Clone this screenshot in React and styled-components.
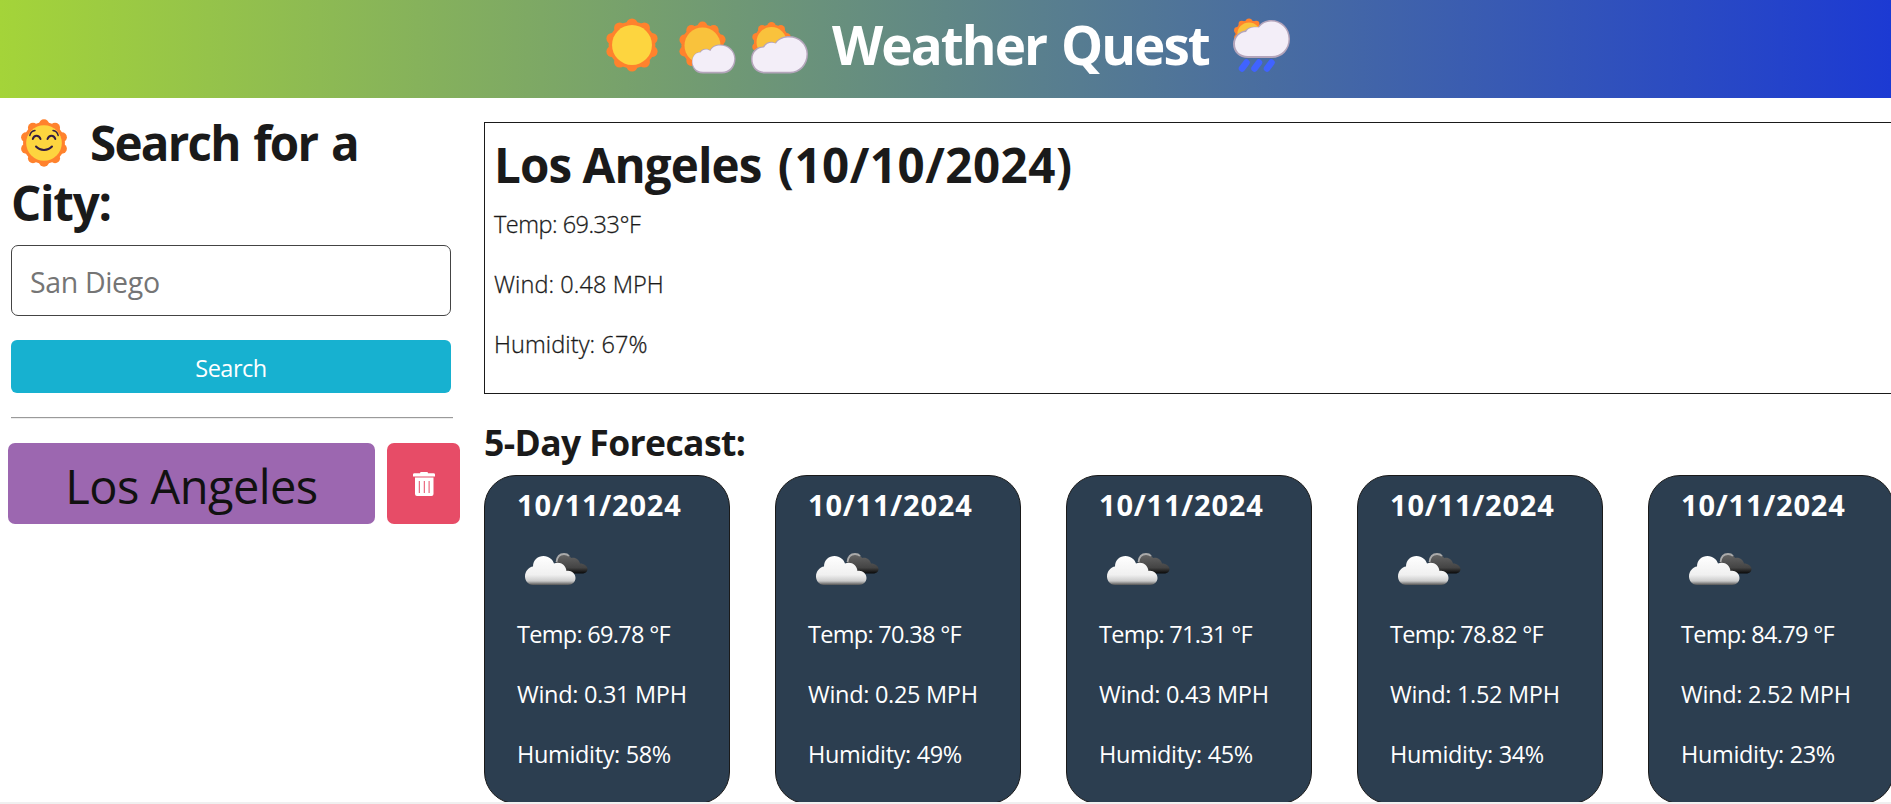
import React from "react";
import styled, { createGlobalStyle } from "styled-components";

const GlobalStyle = createGlobalStyle`
  * { box-sizing: border-box; }
  html, body { margin: 0; background: #fff; }
  body { overflow: hidden; font-family: "Open Sans", "Noto Sans", sans-serif; color: #1a1a1a; }
  h1, h2, h3, p { margin: 0; }
`;

const Page = styled.div`
  height: 804px;
  display: flex;
  flex-direction: column;
  overflow: hidden;
`;

const Header = styled.header`
  flex: none;
  height: 98px;
  display: flex;
  align-items: flex-start;
  padding-left: 602px;
  background: linear-gradient(90deg, #a4d439, #1c3ad3);
  color: #fff;
`;

const Icon = styled.svg`
  display: block;
  flex: none;
  overflow: visible;
  margin-left: ${(p) => p.$left || 0}px;
  margin-top: ${(p) => p.$top || 0}px;
`;

const Title = styled.h1`
  margin-left: 24px;
  width: 401px;
  font-size: 53px;
  line-height: 89px;
  letter-spacing: -1.95px;
  word-spacing: 3px;
  white-space: nowrap;
`;

const Body = styled.div`
  flex: 1;
  min-height: 0;
  display: flex;
  overflow: hidden;
`;

const Sidebar = styled.aside`
  flex: none;
  width: 484px;
  padding: 16px 24px 0 8px;
`;

const SearchForm = styled.form`
  width: 442px;
  margin-left: 3px;
  display: flex;
  flex-direction: column;
`;

const SearchHeading = styled.h2`
  font-size: 47.5px;
  line-height: 58px;
  letter-spacing: -1.75px;
  word-spacing: 3px;
  white-space: nowrap;
`;

const HeadingLine = styled.span`
  display: flex;
  height: 60px;
`;

const HeadingText = styled.span`
  margin-left: ${(p) => p.$left || 0}px;
  letter-spacing: ${(p) => (p.$loose ? "-1.2px" : "inherit")};
`;

const Input = styled.input`
  width: 440px;
  height: 71px;
  margin-top: 11px;
  padding: 2px 18px 0 18px;
  border: 1px solid #444;
  border-radius: 7px;
  font: 400 28.5px "Open Sans", sans-serif;
  letter-spacing: -0.35px;
  &::placeholder { color: #757575; opacity: 1; }
`;

const SearchButton = styled.button`
  width: 440px;
  height: 53px;
  margin-top: 24px;
  padding: 3px 0 0;
  border: 0;
  border-radius: 6px;
  background: #17b1d0;
  color: #fff;
  font: 400 23.5px "Open Sans", sans-serif;
  letter-spacing: -0.5px;
`;

const Rule = styled.hr`
  width: 442px;
  height: 2px;
  margin: 24px 0 24px;
  border: 0;
  border-top: 1px solid #9a9a9a;
  border-bottom: 1px solid #ededed;
`;

const HistoryRow = styled.div`
  display: flex;
  gap: 12px;
`;

const CityButton = styled.button`
  width: 367px;
  height: 81px;
  padding: 5px 0 0;
  border: 0;
  border-radius: 7px;
  background: #9c67b0;
  color: #111;
  font: 400 47px "Open Sans", sans-serif;
  letter-spacing: -0.55px;
`;

const DeleteButton = styled.button`
  width: 73px;
  height: 81px;
  padding: 0;
  border: 0;
  border-radius: 7px;
  background: #e74c67;
  display: flex;
  justify-content: center;
  align-items: center;
`;

const Main = styled.main`
  flex: none;
  width: 1450px;
  padding-top: 24px;
`;

const Today = styled.section`
  height: 272px;
  padding: 13px 0 0 9px;
  border: 1px solid #1a1a1a;
`;

const CityName = styled.h2`
  height: 60px;
  font-size: 47.5px;
  line-height: 58px;
  letter-spacing: -0.9px;
  white-space: nowrap;
`;

const TodayDate = styled.span`
  margin-left: 5px;
  letter-spacing: 0.5px;
`;

const Reading = styled.p`
  height: 60px;
  font-size: 23.5px;
  line-height: ${(p) => (p.$light ? 56 : 60)}px;
  font-weight: ${(p) => (p.$light ? 300 : 400)};
  -webkit-text-stroke: ${(p) => (p.$light ? "0.3px #1a1a1a" : "0")};
  letter-spacing: ${(p) => p.$spacing ?? -0.3}px;
  white-space: nowrap;
`;

const ForecastHeading = styled.h3`
  height: 81px;
  padding-top: 24px;
  font-size: 35.5px;
  line-height: 48px;
  letter-spacing: -0.6px;
`;

const Cards = styled.div`
  display: flex;
  gap: 45px;
`;

const Card = styled.article`
  flex: none;
  width: 246px;
  height: 329px;
  padding: 11px 0 0 32px;
  border: 1px solid #1a1a1a;
  border-radius: 32px;
  background: #2c3e50;
  color: #fff;
`;

const CardDate = styled.h3`
  font-size: 29px;
  line-height: 36px;
  letter-spacing: 0.8px;
`;

const CardIconRow = styled.div`
  height: 81px;
  padding-top: 30px;
`;

const ScrollTrack = styled.div`
  flex: none;
  height: 2px;
  background: #f0f0f0;
`;

const BUMPS = Array.from({ length: 10 }, (_, i) => {
  const a = (i * Math.PI) / 5;
  return [Math.sin(a), -Math.cos(a)];
});

function SunShape({ cx, cy, r, core = "#fdd53f" }) {
  return (
    <g>
      <g fill="#ff822d">
        <circle cx={cx} cy={cy} r={r * 0.88} />
        {BUMPS.map(([x, y], i) => (
          <circle key={i} cx={cx + x * r * 0.79} cy={cy + y * r * 0.79} r={r * 0.21} />
        ))}
      </g>
      <circle cx={cx} cy={cy} r={r * 0.75} fill={core} />
    </g>
  );
}

function Sun() {
  return (
    <Icon $left={3} $top={18} width="54" height="54" viewBox="0 0 54 54">
      <SunShape cx={27} cy={27} r={26.6} />
    </Icon>
  );
}

function SunSmallCloud() {
  return (
    <Icon $left={19} $top={21} width="60" height="54" viewBox="0 0 60 54">
      <SunShape cx={24.5} cy={24.5} r={24} core="#f9c23c" />
      <path d="M25 52.500C17 52.500 13 46 14 40C14.500 34 18 31 22 31C24 27 29 27 32 29C34 25 38 23.500 42 23.500C51 23.500 57.500 29.500 57.500 38C57.500 46.500 52 52.500 44 52.500Z" fill="#b4a5bb" />
      <path d="M25 50.800C17.500 50.800 14.400 45 14.400 40C14.800 34 18.500 31.500 22.500 31.500C25 27.500 30 28 32.500 30C34 26 38 24.500 42 24.500C50 24.500 56.200 30.500 56.200 37.500C56.200 45 51 50.800 44 50.800Z" fill="#f3eef8" />
    </Icon>
  );
}

function SunLargeCloud() {
  return (
    <Icon $left={12} $top={21} width="58" height="54" viewBox="0 0 58 54">
      <SunShape cx={21.500} cy={21} r={20} core="#f9c23c" />
      <path d="M15 52.500C6 52.500 1 46 1 38C1 30 7 25.500 13 25.500C17 20 22 20 25 22C29 16 35 15 39 15C50 15 58 23 58 33C58 44 50 52.500 40 52.500Z" fill="#b4a5bb" />
      <path d="M15 50.800C7 50.800 2.500 45 2.500 38C2.500 31 8 26.500 14 26.500C17 21 22 21 26 22.500C29 17.500 35 16.500 39 16.500C49 16.500 56.500 24 56.500 33C56.500 43 49 50.800 40 50.800Z" fill="#f3eef8" />
    </Icon>
  );
}

function SunRain() {
  return (
    <Icon $top={17} width="58" height="56" viewBox="0 0 58 56">
      <SunShape cx={16} cy={17} r={15.500} core="#f9c23c" />
      <path d="M15 41C6 41 0 35 0 27C0 20 6 14.500 12 13.500C16 9 21 9.500 25 10C28 5 33 3 38 3C49 3 57 11 57 22C57 33 49 41 39 41Z" fill="#b4a5bb" />
      <path d="M15 39C7 39 2 34 2 27C2 20 7 15.500 13 15C16 10 21 10 26 10.500C29 6.500 33 4.500 38 4.500C48 4.500 55.500 12 55.500 22C55.500 32 48 39 39 39Z" fill="#f3eef8" />
      <path d="M13.500 45.500L9 51.500M26 45.500L21.500 51.500M38.500 45.500L34 51.500" stroke="#4063ff" strokeWidth="6.500" strokeLinecap="round" />
    </Icon>
  );
}

function SunFace() {
  return (
    <Icon $left={9} $top={5} width="48" height="48" viewBox="0 0 48 48">
      <SunShape cx={24} cy={24} r={23.800} />
      <g fill="none" stroke="#321b41" strokeWidth="2" strokeLinecap="round">
        <path d="M12.800 20C14 15.500 19 15.500 20.500 20M27.500 20C29 15.500 34 15.500 35.300 20M16 27.500C20 32 28 32 32 27.500" />
        <path d="M9.800 16.500C10.500 13.500 12.500 11.800 15 11.500M38.200 16.500C37.500 13.500 35.500 11.800 33 11.500" strokeWidth="1.400" />
      </g>
    </Icon>
  );
}

function Trash() {
  return (
    <Icon width="22" height="24" viewBox="0 0 22 24">
      <path fill="#fff" fillRule="evenodd" d="M7 1.200Q7 0 8.200 0H14Q15 0 15 1.200H20.500Q22 1.200 22 2.500V4.500H0V2.500Q0 1.200 1.500 1.200ZM2 5.500H20.500V22Q20.500 24 18.500 24H4Q2 24 2 22ZM5.800 9V21H6.800V9ZM10.800 9V21H11.800V9ZM15.600 9V21H16.600V9Z" />
    </Icon>
  );
}

function BrokenClouds() {
  return (
    <Icon $left={7.5} width="63" height="34" viewBox="0 0 63 34">
      <defs>
        <linearGradient id="cloudFront" x1="0" y1="0" x2="0" y2="1">
          <stop offset="0" stopColor="#fff" />
          <stop offset=".65" stopColor="#f0f0f0" />
          <stop offset=".86" stopColor="#ccc" />
          <stop offset="1" stopColor="#555" />
        </linearGradient>
        <linearGradient id="cloudBack" x1="0" y1="0" x2="0" y2="1">
          <stop offset="0" stopColor="#666" />
          <stop offset=".7" stopColor="#444" />
          <stop offset="1" stopColor="#080808" />
        </linearGradient>
      </defs>
      <path d="M31 11C31 4 35 1 39 1C43 1 45 3 46 5C51 4 54 7 55 10.500C59 10.500 62.500 13 62.500 16C62.500 19 60 20.500 57 20.500H38Z" fill="url(#cloudBack)" />
      <path d="M31.500 9C32 4 35 1 39 1C41 1 43 1.800 44 3" fill="none" stroke="#aaa" strokeWidth="1.800" />
      <path d="M8 32C3 32 0 27.500 0 23.500C0 18 4 14 8 13.500C8 7 13 3 18.500 3C24 3 28 7 29 10.500C35 8 41 12 41.500 18C46 17 50.500 20.500 50.500 25C50.500 29 47 32 43 32Z" fill="url(#cloudFront)" />
    </Icon>
  );
}

const FORECAST = [
  { temp: "69.78", wind: "0.31", humidity: 58 },
  { temp: "70.38", wind: "0.25", humidity: 49 },
  { temp: "71.31", wind: "0.43", humidity: 45 },
  { temp: "78.82", wind: "1.52", humidity: 34 },
  { temp: "84.79", wind: "2.52", humidity: 23 },
];

export default function App() {
  return (
    <Page>
      <GlobalStyle />
      <Header>
        <Sun />
        <SunSmallCloud />
        <SunLargeCloud />
        <Title>Weather Quest</Title>
        <SunRain />
      </Header>
      <Body>
        <Sidebar>
          <SearchForm onSubmit={(e) => e.preventDefault()}>
            <SearchHeading>
              <HeadingLine>
                <SunFace />
                <HeadingText $left={22}>Search for a</HeadingText>
              </HeadingLine>
              <HeadingLine>
                <HeadingText $loose>City:</HeadingText>
              </HeadingLine>
            </SearchHeading>
            <Input placeholder="San Diego" />
            <SearchButton>Search</SearchButton>
            <Rule />
          </SearchForm>
          <HistoryRow>
            <CityButton>Los Angeles</CityButton>
            <DeleteButton aria-label="Delete">
              <Trash />
            </DeleteButton>
          </HistoryRow>
        </Sidebar>
        <Main>
          <Today>
            <CityName>
              Los Angeles <TodayDate>(10/10/2024)</TodayDate>
            </CityName>
            <Reading $light $spacing={-0.5}>Temp: 69.33°F</Reading>
            <Reading $light $spacing={0.08}>Wind: 0.48 MPH</Reading>
            <Reading $light $spacing={0.1}>Humidity: 67%</Reading>
          </Today>
          <ForecastHeading>5-Day Forecast:</ForecastHeading>
          <Cards>
            {FORECAST.map((day) => (
              <Card key={day.temp}>
                <CardDate>10/11/2024</CardDate>
                <CardIconRow>
                  <BrokenClouds />
                </CardIconRow>
                <Reading $spacing={-0.7}>Temp: {day.temp} °F</Reading>
                <Reading>Wind: {day.wind} MPH</Reading>
                <Reading $spacing={-0.35}>Humidity: {day.humidity}%</Reading>
              </Card>
            ))}
          </Cards>
        </Main>
      </Body>
      <ScrollTrack />
    </Page>
  );
}
